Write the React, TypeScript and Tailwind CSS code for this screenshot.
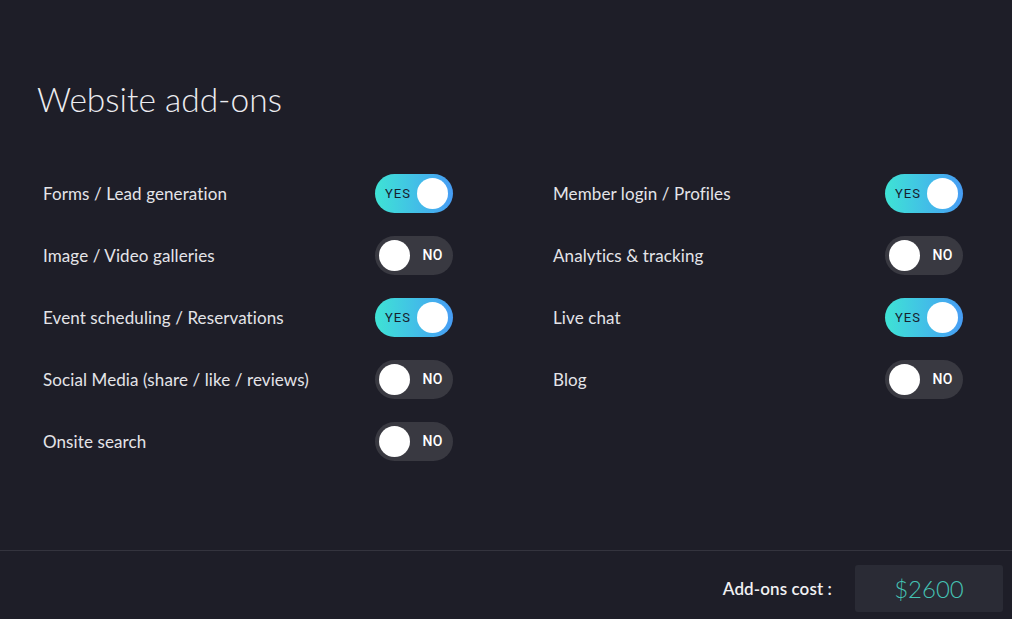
import { useState } from "react";

type Addon = { label: string; on: boolean };

const leftInit: Addon[] = [
  { label: "Forms / Lead generation", on: true },
  { label: "Image / Video galleries", on: false },
  { label: "Event scheduling / Reservations", on: true },
  { label: "Social Media (share / like / reviews)", on: false },
  { label: "Onsite search", on: false },
];

const rightInit: Addon[] = [
  { label: "Member login / Profiles", on: true },
  { label: "Analytics & tracking", on: false },
  { label: "Live chat", on: true },
  { label: "Blog", on: false },
];

function Toggle({ on, onClick }: { on: boolean; onClick: () => void }) {
  return (
    <button
      onClick={onClick}
      className={`flex h-[39px] w-[78px] shrink-0 items-center justify-between rounded-full font-['Roboto',sans-serif] ${
        on
          ? "bg-gradient-to-r from-[#3fe3d4] to-[#479cf4] pl-[10px] pr-[5px] text-[13px]"
          : "bg-[#393941] pl-[4px] pr-[10px] text-[14px]"
      }`}
    >
      {on ? (
        <>
          <span className="tracking-[1px] text-[#17222e]">YES</span>
          <span className="h-[31px] w-[31px] rounded-full bg-white" />
        </>
      ) : (
        <>
          <span className="h-[31px] w-[31px] rounded-full bg-white" />
          <span className="font-medium tracking-[0.5px] text-white">NO</span>
        </>
      )}
    </button>
  );
}

function Column({ items, setItems }: { items: Addon[]; setItems: (a: Addon[]) => void }) {
  return (
    <div className="flex flex-col gap-[23px]">
      {items.map((item, i) => (
        <div key={item.label} className="flex h-[39px] items-center justify-between">
          <span className="text-[17px] tracking-[0.1px] text-[#e4e4e8]">{item.label}</span>
          <Toggle
            on={item.on}
            onClick={() => setItems(items.map((x, j) => (j === i ? { ...x, on: !x.on } : x)))}
          />
        </div>
      ))}
    </div>
  );
}

export default function App() {
  const [left, setLeft] = useState(leftInit);
  const [right, setRight] = useState(rightInit);

  return (
    <div className="flex h-[619px] w-full flex-col bg-[#1e1e28] font-['Lato',sans-serif]">
      {/* Header */}
      <div className="pl-[37px] pt-[79px]">
        <h1 className="text-[33.5px] font-light leading-[40px] text-[#ececf0]">Website add-ons</h1>
      </div>

      {/* Add-on list */}
      <div className="mt-[55px] grid grid-cols-[410px_410px] gap-x-[100px] pl-[43px]">
        <Column items={left} setItems={setLeft} />
        <Column items={right} setItems={setRight} />
      </div>

      <div className="flex-1" />

      {/* Footer */}
      <div className="flex items-center justify-end gap-[23px] border-t border-[#34343e] pb-[7px] pr-[9px] pt-[14px]">
        <span className="text-[17px] font-semibold tracking-[0.1px] text-[#f0f0f2]">Add-ons cost :</span>
        <div className="flex h-[47px] w-[148px] items-center justify-center rounded-[3px] bg-[#2a2b35]">
          <span className="text-[24px] font-light text-[#45c2b4]">$2600</span>
        </div>
      </div>
    </div>
  );
}
